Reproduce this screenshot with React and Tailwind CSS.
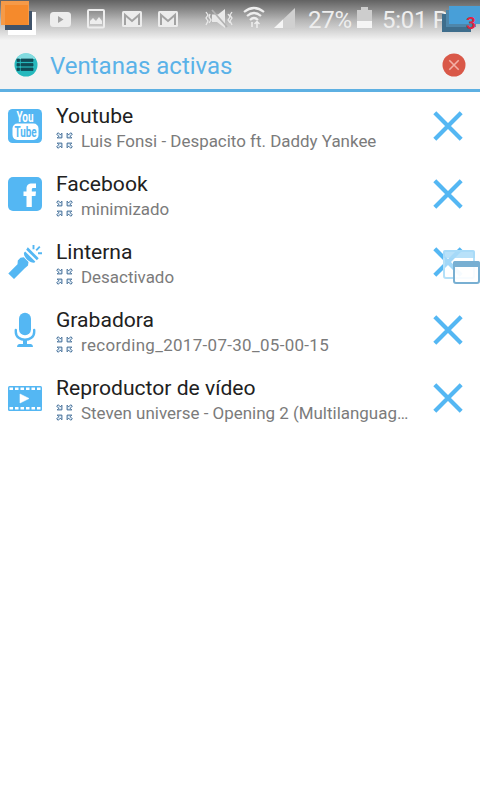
const BLUE = '#54b7f3';

function YoutubeIcon() {
  return (
    <svg className="overflow-visible" width="34" height="34" viewBox="0 0 34 34">
      <rect width="34" height="34" rx="4.500" fill={BLUE} />
      <text x="17" y="13.300" textAnchor="middle" textLength="17" lengthAdjust="spacingAndGlyphs" fontSize="14" fontWeight="700" fill="#fff">You</text>
      <rect x="4.500" y="14.500" width="26" height="16.500" rx="5" fill="#fff" />
      <text x="17.500" y="28" textAnchor="middle" textLength="22" lengthAdjust="spacingAndGlyphs" fontSize="15" fontWeight="700" fill={BLUE}>Tube</text>
    </svg>
  );
}

function FacebookIcon() {
  return (
    <svg width="34" height="34" viewBox="0 0 34 34">
      <rect width="34" height="34" rx="5" fill={BLUE} />
      <path d="M18.500 30V19H15.500V14.500H18.500V12C18.500 8 20.300 6.500 24 6.500H28V11H25.500C24.200 11 23.800 11.500 23.800 12.700V14.500H28L27.500 19H23.800V30Z" fill="#fff" />
    </svg>
  );
}

function FlashlightIcon() {
  return (
    <svg width="34" height="36" viewBox="0 0 34 36" fill={BLUE}>
      <path d="M0.300 29.500 9.500 20.300 9.800 16.500 12.500 13.700 15.800 13.300 20.500 18 20 21.500 16.500 24.500 6 35Z" />
      <path d="M17.200 7.600 27.300 17.500 26.300 18.800C21.500 19.200 15.300 13 16 8.800Z" />
      <path d="M19.800 3.200 30.700 14.200 28.800 16.200 18.200 5.700Z" />
      <path d="M25.500 1 25.500 5.200M31.800 2.700 28.200 6.300M34 9.200 30 9.200" stroke={BLUE} strokeWidth="1.900" fill="none" />
    </svg>
  );
}

function MicIcon() {
  return (
    <svg width="34" height="36" viewBox="0 0 34 36">
      <rect x="11" y="0.800" width="12" height="22.500" rx="6" fill={BLUE} />
      <path d="M7.800 18V20C7.800 30.300 26.200 30.300 26.200 20V18" fill="none" stroke={BLUE} strokeWidth="2.400" strokeLinecap="round" />
      <path d="M15 27H19V32H23Q25 32.500 25 35H9Q9 32.500 11 32H15Z" fill={BLUE} />
    </svg>
  );
}

function FilmIcon() {
  const holes = [1.5, 7, 12.5, 18, 23.5, 29];
  return (
    <svg width="34" height="25" viewBox="0 0 34 25">
      <rect width="34" height="25" rx="1.500" fill={BLUE} />
      {holes.map((x) => (
        <g key={x} fill="#fff">
          <rect x={x} y="1.500" width="3.500" height="2.500" />
          <rect x={x} y="21" width="3.500" height="2.500" />
        </g>
      ))}
      <path d="M12 8V17L21 12.500Z" fill="#fff" stroke="#fff" strokeWidth="0.600" strokeLinejoin="round" />
    </svg>
  );
}

function MinimizeIcon() {
  return (
    <svg className="shrink-0" width="17" height="17" viewBox="0 0 17 17" fill="none" stroke="#3f6a94" strokeWidth="1">
      {[0, 90, 180, 270].map((angle) => (
        <g key={angle} transform={`rotate(${angle} 8.500 8.500)`}>
          <path d="M0.700 2.200 2.200 0.700 4.300 2.800 5.900 1.200V5.900H1.200L2.800 4.300Z" fill="#e3eff9" />
        </g>
      ))}
    </svg>
  );
}

function CloseIcon() {
  return (
    <svg className="shrink-0" width="30" height="30" viewBox="0 0 30 30" stroke={BLUE} strokeWidth="4.200">
      <path d="M1.800 1.800 28.200 28.200M28.200 1.800 1.800 28.200" />
    </svg>
  );
}

function Row({ icon, title, detail, detailClass = '' }) {
  return (
    <li className="flex h-[68px] items-center pl-2 pr-[17px]">
      <div className="flex w-[34px] shrink-0 justify-center">{icon}</div>
      <div className="ml-[14px] min-w-0 flex-1 pt-[3px]">
        <div className="h-[26px] whitespace-nowrap text-[21.100px] leading-[26px] text-[#212121]">{title}</div>
        <div className="flex h-6 items-center gap-2 whitespace-nowrap text-[16.950px] leading-6 text-[#7b7b7b]">
          <MinimizeIcon />
          <span className={detailClass}>{detail}</span>
        </div>
      </div>
      <CloseIcon />
    </li>
  );
}

function GmailIcon() {
  return (
    <svg width="20" height="16" viewBox="0 0 20 16">
      <rect width="20" height="16" rx="1.500" fill="#ececec" />
      <path d="M3 14V4L10 10 17 4V14" fill="none" stroke="#a3a3a3" strokeWidth="2" />
    </svg>
  );
}

function StatusBar() {
  return (
    <div className="relative flex h-10 items-start bg-linear-to-b from-[#626262] via-[#b5b5b5] to-[#f2f2f2] text-[#eeeeee]">
      <svg className="shrink-0" width="40" height="40" viewBox="0 0 40 40">
        <rect x="8" y="12" width="28" height="23" fill="#fff" />
        <rect x="5" y="11" width="27" height="19" fill="#40536a" />
        <rect x="1" y="1" width="28" height="24" fill="#f59a48" />
        <rect x="5" y="5" width="23" height="20" fill="#f58a2c" />
      </svg>
      <div className="ml-[10px] flex h-[38px] items-center gap-4">
        <svg width="21" height="15" viewBox="0 0 21 15">
          <rect width="21" height="15" rx="3.500" fill="#ededed" />
          <path d="M8 4V11L13.500 7.500Z" fill="#a3a3a3" />
        </svg>
        <svg width="19" height="20" viewBox="0 0 19 20">
          <rect x="1" y="1" width="16" height="17.500" rx="1" fill="none" stroke="#ededed" strokeWidth="2" />
          <path d="M3 15V12L6 9 9 12 12 8 15 12V15Z" fill="#ededed" />
        </svg>
        <GmailIcon />
        <GmailIcon />
      </div>
      <svg className="ml-[27px] mt-2 shrink-0" width="28" height="22" viewBox="0 0 28 22">
        <path d="M7 6.500H13L20 1V20L12 14H7Z" fill="#e9e9e9" />
        <path d="M7 2 22 19" stroke="#b2b2b2" strokeWidth="1.800" />
        <path d="M1 4 3 7 1 10 3 13 1 17M5 6 4 9 6 12 4 15M23 6 25 9 23 12 25 15M27 4 25 7 27 10 25 13 27 17" fill="none" stroke="#e9e9e9" strokeWidth="1.300" />
      </svg>
      <svg className="ml-[10px] mt-[6px] shrink-0" width="22" height="23" viewBox="0 0 22 23" fill="none" stroke="#eee" strokeWidth="2.200">
        <path d="M1 6Q11-2 21 6M4 10Q11 4 18 10M7 14Q11 10 15 14" />
        <path d="M9 16V21M14 22V16M11.500 18 14 15.500 16.500 18" strokeWidth="1.500" />
      </svg>
      <svg className="ml-[9px] mt-[7px] shrink-0" width="21" height="22" viewBox="0 0 21 22">
        <path d="M0 21 21 1V21Z" fill="#d0d0d0" />
        <path d="M0 21 9 12.500V21Z" fill="#f5f5f5" />
      </svg>
      <span className="ml-[13px] w-[44px] whitespace-nowrap text-[24px] leading-[41px] tracking-[-0.300px]">27%</span>
      <svg className="ml-[5px] mt-[7px] shrink-0" width="15" height="22" viewBox="0 0 15 22">
        <path d="M4 0H11V3H15V14H0V3H4Z" fill="#cdcdcd" />
        <rect y="14" width="15" height="7" fill="#f5f5f5" />
      </svg>
      <span className="ml-[10px] w-[70px] whitespace-nowrap text-[24px] leading-[41px] tracking-[-0.300px]">5:01 P</span>
      <svg className="absolute right-0 top-0" width="40" height="40" viewBox="0 0 40 40">
        <rect x="2" y="14" width="29" height="18" fill="#3e6d8c" />
        <rect x="6" y="10" width="30" height="17" fill="#4e86aa" />
        <rect x="9" y="6" width="31" height="18" fill="#489fd8" />
        <text x="26" y="28.500" fontSize="17" fontWeight="700" fill="#df2440">3</text>
      </svg>
    </div>
  );
}

export default function App() {
  return (
    <main className="relative h-[800px] w-[480px] overflow-hidden bg-white font-['Roboto',sans-serif]">
      <StatusBar />
      <header className="flex h-[52px] items-center border-b-[3px] border-[#5eb0e2] bg-[#f3f3f3] pl-[14px] pr-[14px]">
        <svg width="24" height="24" viewBox="0 0 24 24">
          <circle cx="12" cy="12" r="11.500" fill="#26b9bd" />
          <path d="M2 6A11.500 11.500 0 0 1 22 6Z" fill="#83dce0" />
          <path d="M3 6H5.500V8.500H3ZM7 6H19V8.500H7ZM3 10.500H5.500V13H3ZM7 10.500H19V13H7ZM3 15H5.500V17.500H3ZM7 15H19V17.500H7Z" fill="#104b57" stroke="#104b57" strokeWidth="0.800" />
        </svg>
        <h1 className="ml-3 flex-1 whitespace-nowrap pt-[3px] text-[24px] leading-8 text-[#5ab2e8]">Ventanas activas</h1>
        <svg width="24" height="24" viewBox="0 0 24 24">
          <circle cx="12" cy="12" r="11.500" fill="#d95848" />
          <path d="M7.300 7.300 16.700 16.700M16.700 7.300 7.300 16.700" stroke="#f3b0a6" strokeWidth="1.600" />
        </svg>
      </header>
      <ul>
        <Row icon={<YoutubeIcon />} title="Youtube" detail="Luis Fonsi - Despacito ft. Daddy Yankee" />
        <Row icon={<FacebookIcon />} title="Facebook" detail="minimizado" />
        <Row icon={<FlashlightIcon />} title="Linterna" detail="Desactivado" />
        <Row icon={<MicIcon />} title="Grabadora" detail="recording_2017-07-30_05-00-15" detailClass="tracking-[0.330px]" />
        <Row icon={<FilmIcon />} title="Reproductor de vídeo" detail="Steven universe - Opening 2 (Multilanguag…" />
      </ul>
      <svg className="absolute right-0 top-[249px]" width="38" height="36" viewBox="0 0 38 36">
        <rect x="2" y="2" width="30" height="27" rx="2" fill="#fff" fillOpacity="0.450" stroke="#b4e0f8" strokeWidth="2" />
        <path d="M1 9V3Q1 1 3 1H31Q33 1 33 3V9Z" fill="#a6daf7" fillOpacity="0.800" />
        <rect x="12" y="13" width="25" height="21" rx="2" fill="#fff" fillOpacity="0.900" stroke="#78afd2" strokeWidth="2" />
        <path d="M11 18V14Q11 12 13 12H36Q38 12 38 14V18Z" fill="#78afd2" />
      </svg>
    </main>
  );
}
